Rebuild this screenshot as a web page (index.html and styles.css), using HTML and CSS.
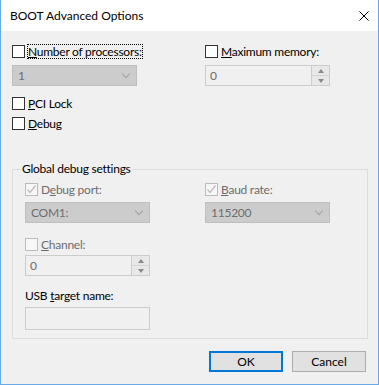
FILE: index.html
```html
<!DOCTYPE html>
<html lang="en">
<head>
    <meta charset="UTF-8">
    <title>BOOT Advanced Options</title>
    <link rel="stylesheet" href="styles.css">
</head>
<body>
    <div class="window">
        <div class="titlebar">
            <span class="title">BOOT Advanced Options</span>
            <svg class="close" width="10" height="10" viewBox="0 0 10 10">
                <path d="M0.5 0.5 L9.5 9.5 M9.5 0.5 L0.5 9.5" stroke="#000" stroke-width="1"/>
            </svg>
        </div>

        <div class="content">
            <div class="top-row">
                <div class="col-left">
                    <div class="check-row">
                        <span class="box"></span>
                        <span class="label focus"><u>N</u>umber of processors:</span>
                    </div>
                    <div class="combo disabled">
                        <span class="value">1</span>
                        <span class="chevron"></span>
                    </div>
                </div>
                <div class="col-right">
                    <div class="check-row">
                        <span class="box"></span>
                        <span class="label"><u>M</u>aximum memory:</span>
                    </div>
                    <div class="spin-edit">
                        <span class="value">0</span>
                        <span class="spin">
                            <span class="spin-btn"><span class="tri up"></span></span>
                            <span class="spin-btn"><span class="tri down"></span></span>
                        </span>
                    </div>
                </div>
            </div>

            <div class="check-row pci">
                <span class="box"></span>
                <span class="label"><u>P</u>CI Lock</span>
            </div>
            <div class="check-row debug">
                <span class="box"></span>
                <span class="label"><u>D</u>ebug</span>
            </div>

            <fieldset class="group">
                <legend>Global debug settings</legend>
                <div class="top-row">
                    <div class="col-left inner">
                        <div class="check-row">
                            <span class="box dim">
                                <svg width="11" height="11" viewBox="0 0 11 11"><path d="M1.5 5.5 L4 8.5 L9.5 1.5" fill="none" stroke="#bcbcbc" stroke-width="1.3"/></svg>
                            </span>
                            <span class="label gray">D<u>e</u>bug port:</span>
                        </div>
                        <div class="combo disabled">
                            <span class="value">COM1:</span>
                            <span class="chevron"></span>
                        </div>
                    </div>
                    <div class="col-right">
                        <div class="check-row">
                            <span class="box dim">
                                <svg width="11" height="11" viewBox="0 0 11 11"><path d="M1.5 5.5 L4 8.5 L9.5 1.5" fill="none" stroke="#bcbcbc" stroke-width="1.3"/></svg>
                            </span>
                            <span class="label gray"><u>B</u>aud rate:</span>
                        </div>
                        <div class="combo disabled">
                            <span class="value">115200</span>
                            <span class="chevron"></span>
                        </div>
                    </div>
                </div>

                <div class="check-row channel">
                    <span class="box dim"></span>
                    <span class="label gray"><u>C</u>hannel:</span>
                </div>
                <div class="spin-edit">
                    <span class="value">0</span>
                    <span class="spin">
                        <span class="spin-btn"><span class="tri up"></span></span>
                        <span class="spin-btn"><span class="tri down"></span></span>
                    </span>
                </div>

                <div class="field-label">USB <u>t</u>arget name:</div>
                <div class="textbox"></div>
            </fieldset>

            <div class="buttons">
                <button class="btn default">OK</button>
                <button class="btn">Cancel</button>
            </div>
        </div>
    </div>
</body>
</html>
```

FILE: styles.css
```css
body {
    margin: 0;
    background: #f0f0f0;
}

.window {
    width: 379px;
    height: 385px;
    box-sizing: border-box;
    border: 1px solid #6aa8e6;
    border-top: none;
    background: #f0f0f0;
    display: flex;
    flex-direction: column;
    font-family: Lato, "Noto Sans", sans-serif;
    font-size: 12px;
    letter-spacing: -0.25px;
    color: #000;
}

/* title bar */
.titlebar {
    height: 31px;
    background: #fff;
    display: flex;
    align-items: center;
    justify-content: space-between;
    padding: 0 9px 0 9px;
    flex-shrink: 0;
}
.title {
    font-size: 12px;
    line-height: 16px;
    letter-spacing: 0;
}
.close {
    display: block;
}

.content {
    padding: 13px 10px 0 11px;
}

u {
    text-decoration: underline;
    text-underline-offset: 1px;
}

/* check boxes */
.check-row {
    display: flex;
    align-items: center;
    height: 15px;
}
.box {
    width: 13px;
    height: 13px;
    box-sizing: border-box;
    border: 1px solid #333;
    background: #fff;
    margin-right: 2px;
    flex-shrink: 0;
    display: flex;
    align-items: center;
    justify-content: center;
}
.box.dim {
    border-color: #bcbcbc;
    background: #f7f7f7;
}
.label {
    line-height: 15px;
    padding: 0 1px;
    white-space: nowrap;
}
.label.focus {
    outline: 1px dotted #000;
    outline-offset: -1px;
}
.gray {
    color: #6d6d6d;
}

.top-row {
    display: flex;
}
.col-left {
    width: 193px;
}
.col-left.inner {
    width: 180px;
}

/* combo boxes */
.combo {
    width: 125px;
    height: 21px;
    box-sizing: border-box;
    margin-top: 6px;
    display: flex;
    align-items: center;
    justify-content: space-between;
    padding: 0 6px 0 5px;
}
.combo.disabled {
    background: #cccccc;
    border: 1px solid #bfbfbf;
    color: #6d6d6d;
}
.group .combo {
    margin-top: 5px;
}
.chevron {
    width: 5px;
    height: 5px;
    border-right: 1px solid #a2a2a2;
    border-bottom: 1px solid #a2a2a2;
    transform: rotate(45deg);
    margin-top: -4px;
    margin-right: 1px;
}

/* numeric up/down */
.spin-edit {
    width: 125px;
    height: 21px;
    box-sizing: border-box;
    border: 1px solid #cccccc;
    background: #f0f0f0;
    margin-top: 6px;
    display: flex;
    color: #6d6d6d;
}
.spin-edit .value {
    flex: 1;
    padding-left: 4px;
    line-height: 19px;
}
.spin {
    width: 17px;
    display: flex;
    flex-direction: column;
    border-left: 1px solid #cccccc;
}
.spin-btn {
    flex: 1;
    background: #e8e8e8;
    display: flex;
    align-items: center;
    justify-content: center;
}
.spin-btn + .spin-btn {
    border-top: 1px solid #d4d4d4;
}
.tri {
    width: 0;
    height: 0;
    border-left: 3.5px solid transparent;
    border-right: 3.5px solid transparent;
}
.tri.up {
    border-bottom: 4px solid #8a8a8a;
}
.tri.down {
    border-top: 4px solid #8a8a8a;
}

.pci {
    margin-top: 10px;
}
.debug {
    margin-top: 5px;
}

/* group box */
.group {
    margin: 30px 0 0 0;
    padding: 5px 12px 8px 12px;
    border: 1px solid #dcdcdc;
    min-width: 0;
}
.group legend {
    padding: 0 1px;
    margin-left: -4px;
    line-height: 16px;
}
.channel {
    margin-top: 14px;
}
.group .spin-edit {
    margin-top: 3px;
}
.field-label {
    margin-top: 12px;
    line-height: 16px;
}
.textbox {
    width: 125px;
    height: 23px;
    box-sizing: border-box;
    border: 1px solid #cccccc;
    background: #f0f0f0;
    margin-top: 3px;
}

/* dialog buttons */
.buttons {
    display: flex;
    justify-content: flex-end;
    gap: 9px;
    margin-top: 12px;
    margin-right: 2px;
}
.btn {
    width: 74px;
    height: 21px;
    box-sizing: border-box;
    background: #e1e1e1;
    border: 1px solid #adadad;
    font-family: Lato, "Noto Sans", sans-serif;
    font-size: 12px;
    color: #000;
    padding: 0;
}
.btn.default {
    border: 2px solid #0078d7;
}
```
